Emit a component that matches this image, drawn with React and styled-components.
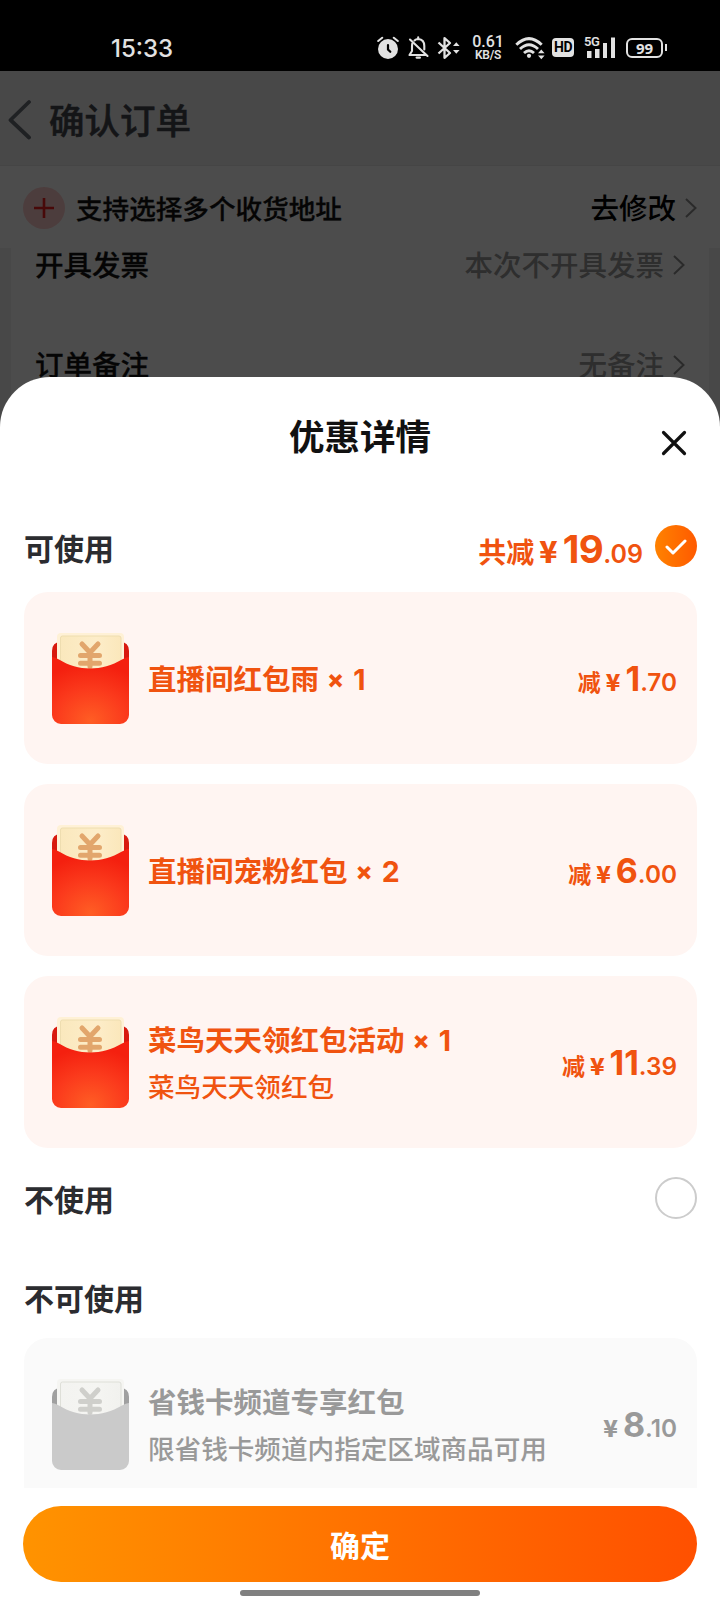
// src/pages/ConfirmOrder.jsx
import React, { useState } from "react";
import styled, { createGlobalStyle } from "styled-components";

const COUPONS = [
  { title: "直播间红包雨", count: 1, int: "1", dec: ".70" },
  { title: "直播间宠粉红包", count: 2, int: "6", dec: ".00" },
  { title: "菜鸟天天领红包活动", count: 1, sub: "菜鸟天天领红包", int: "11", dec: ".39" },
];

const DISABLED = [
  { title: "省钱卡频道专享红包", sub: "限省钱卡频道内指定区域商品可用", int: "8", dec: ".10" },
];

/* --------------------- PAGE --------------------- */

export default function App() {
  const [useCoupons, setUseCoupons] = useState(true);

  return (
    <Screen>
      <GlobalStyle />
      <StatusBar>
        <Clock>15:33</Clock>
        <StatusIcons />
      </StatusBar>

      <Page>
        <NavBar>
          <BackIcon />
          <NavTitle>确认订单</NavTitle>
        </NavBar>
        <AddressRow>
          <PlusBadge>
            <PlusIcon />
          </PlusBadge>
          <AddressText>支持选择多个收货地址</AddressText>
          <RowValue $dark>去修改</RowValue>
          <Chevron />
        </AddressRow>
        <OrderPanel>
          <OrderRow>
            <RowLabel>开具发票</RowLabel>
            <RowValue>本次不开具发票</RowValue>
            <Chevron />
          </OrderRow>
          <OrderRow>
            <RowLabel>订单备注</RowLabel>
            <RowValue>无备注</RowValue>
            <Chevron />
          </OrderRow>
        </OrderPanel>
        <Mask />
      </Page>

      <Sheet>
        <SheetHeader>
          <SheetTitle>优惠详情</SheetTitle>
          <Close aria-label="关闭">
            <CloseIcon />
          </Close>
        </SheetHeader>

        <Scroll>
          <Section $h={88} $pb={4}>
            <SectionTitle $down={5}>可使用</SectionTitle>
            <Total>
              <TotalLabel>共减</TotalLabel>
              <TotalYen>¥</TotalYen>
              <TotalInt>19</TotalInt>
              <TotalDec>.09</TotalDec>
            </Total>
            <Radio $on={useCoupons} onClick={() => setUseCoupons(true)}>
              {useCoupons && <CheckIcon />}
            </Radio>
          </Section>

          <CardList>
            {COUPONS.map((c) => (
              <Coupon key={c.title} {...c} />
            ))}
          </CardList>

          <Section $h={101} $pb={1}>
            <SectionTitle $down={3}>不使用</SectionTitle>
            <Radio $on={!useCoupons} onClick={() => setUseCoupons(false)}>
              {!useCoupons && <CheckIcon />}
            </Radio>
          </Section>

          <Section $h={89}>
            <SectionTitle $down={11}>不可使用</SectionTitle>
          </Section>

          <CardList>
            {DISABLED.map((c) => (
              <Coupon key={c.title} disabled {...c} />
            ))}
          </CardList>
        </Scroll>

        <Footer>
          <Confirm>确定</Confirm>
          <HomeBar />
        </Footer>
      </Sheet>
    </Screen>
  );
}

function Coupon({ title, count, sub, int, dec, disabled }) {
  return (
    <Card $disabled={disabled}>
      <Envelope gray={disabled} />
      <CardText>
        <CardTitle>
          {title}
          {count && (
            <>
              <Times>×</Times>
              {count}
            </>
          )}
        </CardTitle>
        {sub && <CardSub>{sub}</CardSub>}
      </CardText>
      <Price>
        {!disabled && <PriceLabel>减</PriceLabel>}
        <Yen>¥</Yen>
        <PriceInt>{int}</PriceInt>
        <PriceDec>{dec}</PriceDec>
      </Price>
    </Card>
  );
}

/* --------------------- ICONS --------------------- */

function Envelope({ gray }) {
  const id = gray ? "gray" : "red";
  return (
    <EnvelopeSvg viewBox="0 0 80 94">
      <defs>
        <radialGradient id={`body-${id}`} cx="0.5" cy="0.95" r="0.85">
          <stop offset="0" stopColor={gray ? "#cacaca" : "#ff5d24"} />
          <stop offset="0.55" stopColor={gray ? "#cacaca" : "#fb3a1c"} />
          <stop offset="1" stopColor={gray ? "#cacaca" : "#f4200f"} />
        </radialGradient>
        <linearGradient id={`note-${id}`} x1="0" x2="1" y1="0" y2="0">
          <stop offset="0" stopColor={gray ? "#f3f3f0" : "#fae8bd"} />
          <stop offset="0.6" stopColor={gray ? "#f5f5f2" : "#fdedc9"} />
          <stop offset="1" stopColor={gray ? "#f1f1ee" : "#fbe7bb"} />
        </linearGradient>
      </defs>
      <path d="M1 40V18Q1 9 10 9H69Q78 9 78 18V40Z" fill={gray ? "#a0a0a0" : "#d8190f"} />
      <rect x="6" y="0" width="67" height="45" rx="4" fill={gray ? "#f5f5f2" : "#fff1d6"} />
      <rect x="9.5" y="3" width="60.500" height="40" rx="2" fill={`url(#note-${id})`} stroke={gray ? "#dedfd8" : "#eeddb0"} strokeWidth="1" />
      <path
        d="M31 11l8 8.500l8-8.500M29.500 22.500h19M29.500 30.300h19M39 19.500v14"
        fill="none"
        stroke={gray ? "#cfcfcb" : "#e2a66c"}
        strokeWidth="5"
        strokeLinecap="round"
      />
      <path
        d="M1 24Q4 24 8 26.500C27 38.500 51 38.500 71 26.500Q75 24 78 24V82A9 9 0 0 1 69 91H10A9 9 0 0 1 1 82Z"
        fill={`url(#body-${id})`}
      />
    </EnvelopeSvg>
  );
}

const BackIcon = () => (
  <svg width="24" height="42" viewBox="0 0 24 42" fill="none" stroke="#6a6e77" strokeWidth="3.8" strokeLinecap="round" strokeLinejoin="round">
    <path d="M21 3L2.500 21L21 38.500" />
  </svg>
);

const PlusIcon = () => (
  <svg width="22" height="22" viewBox="0 0 22 22" stroke="#f02020" strokeWidth="2.600">
    <path d="M11 1v20M1 11h20" />
  </svg>
);

const Chevron = () => (
  <ChevronSvg viewBox="0 0 12 20">
    <path d="M1 1l9.500 9L1 19" />
  </ChevronSvg>
);

const CloseIcon = () => (
  <svg width="26" height="26" viewBox="0 0 26 26" stroke="#111" strokeWidth="3.200" strokeLinecap="round">
    <path d="M2.500 2.500l21 21M23.500 2.500l-21 21" />
  </svg>
);

const CheckIcon = () => (
  <svg width="22" height="18" viewBox="0 0 22 18" fill="none" stroke="#fff" strokeWidth="3" strokeLinecap="round" strokeLinejoin="round">
    <path d="M2 10l6 6L20 4" />
  </svg>
);

function StatusIcons() {
  return (
    <IconRow>
      <svg width="22" height="24" viewBox="0 0 22 24">
        <circle cx="11" cy="13" r="10" fill="#e2e2e2" />
        <path d="M1.200 5l4-3.300M20.800 5l-4-3.300" stroke="#e2e2e2" strokeWidth="2" strokeLinecap="round" />
        <path d="M11 9v4.500l2.300 2.300" stroke="#000" strokeWidth="2.200" fill="none" strokeLinecap="round" />
      </svg>
      <Gap $w={9} />
      <svg width="21" height="24" viewBox="0 0 21 24" fill="none" stroke="#e2e2e2" strokeWidth="2.100" strokeLinecap="round" strokeLinejoin="round">
        <path d="M6.500 4.500Q8 3 10.200 3Q16.300 3.500 16.300 10v3.500M4.300 7.500Q4 9 4 11v4L1.500 19h16" />
        <path d="M10.200 1.200v1.500M2 3.500L19.500 20" />
        <path d="M8.800 21.600h3" strokeWidth="2.400" />
      </svg>
      <Gap $w={8} />
      <svg width="23" height="24" viewBox="0 0 23 24" fill="none" stroke="#e2e2e2" strokeWidth="2.300" strokeLinejoin="round">
        <path d="M1.500 6.500L13 17L7.500 21.800V2.200L13 7L1.500 17.500" />
        <path d="M16 10l3.300-3.800l3.300 3.800zM16 14l3.300 3.800l3.300-3.800z" fill="#e2e2e2" stroke="none" />
      </svg>
      <Gap $w={12} />
      <NetSpeed>
        <b>0.61</b>
        <span>KB/S</span>
      </NetSpeed>
      <Gap $w={11} />
      <svg width="30" height="24" viewBox="0 0 30 24" fill="none" stroke="#e2e2e2" strokeWidth="2.900">
        <path d="M1.300 8.800Q14 -3.500 26.700 8.800M5 13Q14 4.500 23 13M9 17Q14 12.500 19 17" />
        <circle cx="14" cy="19.800" r="2.100" fill="#e2e2e2" stroke="none" />
        <path d="M23 17.200l3.300-3.700l3.300 3.700zM23 19.500l3.300 3.700l3.300-3.700z" fill="#e2e2e2" stroke="none" />
      </svg>
      <Gap $w={7} />
      <HdBadge>HD</HdBadge>
      <Gap $w={10} />
      <Signal>
        <small>5G</small>
        <svg width="32" height="24" viewBox="0 0 32 24" fill="#e2e2e2">
          <path d="M3 15h4.500v7H3zM11 13h4.500v9H11zM19 7h4v15h-4zM27 1.500h4v20.500h-4z" />
        </svg>
      </Signal>
      <Gap $w={10} />
      <Battery>99</Battery>
      <BatteryTip />
    </IconRow>
  );
}

/* --------------------- STYLES --------------------- */

const GlobalStyle = createGlobalStyle`
  * { box-sizing: border-box; }
  body {
    margin: 0;
    background: #fff;
    font-family: Inter, "Noto Sans CJK SC", sans-serif;
  }
  button { font-family: inherit; border: 0; padding: 0; background: none; }
  svg { display: block; flex: none; }
`;

const Screen = styled.div`
  position: relative;
  width: 720px;
  height: 1600px;
  overflow: hidden;
  white-space: nowrap;
`;

const StatusBar = styled.header`
  display: flex;
  justify-content: space-between;
  height: 71px;
  padding: 35px 53px 0 111px;
  background: #000;
  color: #e2e2e2;
`;

const Clock = styled.span`
  padding-top: 1px;
  font-size: 24px;
  line-height: 26px;
  font-weight: 500;
`;

const IconRow = styled.div`
  display: flex;
  align-items: center;
  height: 25px;
`;

const Gap = styled.i`
  width: ${({ $w }) => $w}px;
`;

const NetSpeed = styled.div`
  display: flex;
  flex-direction: column;
  align-items: center;
  width: 32px;
  b { font: 500 16px/14px Roboto, sans-serif; }
  span { font: 600 12px/12px Roboto, sans-serif; letter-spacing: -0.3px; }
`;

const HdBadge = styled.span`
  width: 22px;
  height: 19px;
  border-radius: 4px;
  background: #e2e2e2;
  color: #000;
  font: 700 14px/19px Roboto, sans-serif;
  letter-spacing: -0.5px;
  text-align: center;
`;

const Signal = styled.div`
  position: relative;
  small {
    position: absolute;
    left: 0;
    top: 0;
    font: 600 13px/12px Roboto, sans-serif;
    letter-spacing: -0.5px;
    background: #000;
  }
`;

const Battery = styled.span`
  width: 37px;
  height: 20px;
  border: 2px solid #e2e2e2;
  border-radius: 6px;
  font: 700 15px/16px "Noto Sans", sans-serif;
  text-align: center;
`;

const BatteryTip = styled.i`
  width: 2px;
  height: 7px;
  margin-left: 2px;
  background: #e2e2e2;
`;

const Page = styled.main`
  position: relative;
  height: 429px;
  background: #f1f1f1;
  overflow: hidden;
`;

const Mask = styled.div`
  position: absolute;
  inset: 0;
  background: rgba(0, 0, 0, 0.7);
`;

const NavBar = styled.div`
  display: flex;
  align-items: center;
  gap: 17px;
  height: 95px;
  padding: 3px 0 0 8px;
  border-bottom: 1px solid #e6e6e6;
`;

const NavTitle = styled.h1`
  margin: 0;
  padding-top: 4px;
  font-size: 35.5px;
  font-weight: 500;
  line-height: 50px;
  color: #45474d;
  -webkit-text-stroke: 0.5px currentColor;
`;

const AddressRow = styled.div`
  display: flex;
  align-items: center;
  height: 82px;
  padding: 1px 23px 0;
  background: #fff;
`;

const PlusBadge = styled.span`
  display: flex;
  align-items: center;
  justify-content: center;
  width: 42px;
  height: 42px;
  margin-right: 11px;
  border-radius: 50%;
  background: #ffcccc;
`;

const AddressText = styled.span`
  flex: 1;
  font-size: 26.6px;
  font-weight: 500;
  color: #111;
  -webkit-text-stroke: 0.3px currentColor;
`;

const OrderPanel = styled.div`
  height: 260px;
  margin: 0 11px;
  padding: 1px 24px 0;
  background: #fff;
`;

const OrderRow = styled.div`
  display: flex;
  align-items: center;
  height: 32px;
  margin-bottom: 68px;
`;

const RowLabel = styled.span`
  flex: 1;
  padding-top: 2px;
  font-size: 28.5px;
  line-height: 32px;
  font-weight: 500;
  color: #111;
  -webkit-text-stroke: 0.3px currentColor;
`;

const RowValue = styled.span`
  margin-right: 9px;
  padding-top: 2px;
  font-size: 28.5px;
  line-height: 32px;
  font-weight: 500;
  color: ${({ $dark }) => ($dark ? "#000" : "#999")};
`;

const ChevronSvg = styled.svg`
  width: 12px;
  height: 20px;
  fill: none;
  stroke: #8c8c8c;
  stroke-width: 2;
`;

const Sheet = styled.section`
  position: absolute;
  left: 0;
  right: 0;
  top: 377px;
  bottom: 0;
  display: flex;
  flex-direction: column;
  background: #fff;
  border-radius: 50px 50px 0 0;
`;

const SheetHeader = styled.div`
  display: grid;
  grid-template-columns: 1fr auto 1fr;
  align-items: center;
  height: 127px;
  padding: 0 33px 5px;
`;

const SheetTitle = styled.h2`
  grid-column: 2;
  margin: 0;
  font-size: 35.5px;
  line-height: 50px;
  font-weight: 700;
  color: #111;
`;

const Close = styled.button`
  justify-self: end;
  padding-top: 9px;
`;

const Scroll = styled.div`
  height: 984px;
  padding: 0 23px 0 24px;
  overflow: hidden;
`;

const Section = styled.div`
  display: flex;
  align-items: center;
  justify-content: space-between;
  height: ${({ $h }) => $h}px;
  padding-bottom: ${({ $pb = 0 }) => $pb}px;
`;

const SectionTitle = styled.h3`
  flex: 1;
  margin: 0;
  padding-top: ${({ $down }) => $down}px;
  font-size: 30px;
  line-height: 44px;
  font-weight: 700;
  color: #2b2c30;
`;

const Total = styled.div`
  display: flex;
  align-items: baseline;
  margin-right: 12px;
  padding-top: 5px;
  color: #f0530f;
  font-weight: 700;
`;

const TotalLabel = styled.span`
  font-size: 28px;
`;
const TotalYen = styled.span`
  margin: 0 5px 0 5px;
  font-family: "Noto Sans CJK SC", sans-serif;
  font-size: 30px;
  font-weight: 800;
  line-height: 1;
`;
const TotalInt = styled.span`
  font-size: 38.5px;
  font-weight: 700;
  letter-spacing: -0.5px;
`;
const TotalDec = styled.span`
  font-size: 25px;
  font-weight: 600;
`;

const Radio = styled.button`
  display: flex;
  align-items: center;
  justify-content: center;
  width: 42px;
  height: 42px;
  border-radius: 50%;
  border: ${({ $on }) => ($on ? "0" : "2px solid #ccc")};
  background: ${({ $on }) => ($on ? "linear-gradient(90deg, #ff8200, #ff5a00)" : "#fff")};
`;

const CardList = styled.div`
  display: flex;
  flex-direction: column;
  gap: 20px;
`;

const Card = styled.article`
  display: flex;
  align-items: center;
  height: 172px;
  padding: 4px 20px 0 27px;
  border-radius: 24px;
  color: ${({ $disabled }) => ($disabled ? "#999" : "#f0530f")};
  background: ${({ $disabled }) => ($disabled ? "#fafafa" : "#fff5f2")};
`;

const EnvelopeSvg = styled.svg`
  width: 80px;
  height: 94px;
  margin-right: 17px;
`;

const CardText = styled.div`
  flex: 1;
  display: flex;
  flex-direction: column;
  gap: 6px;
`;

const CardTitle = styled.h4`
  display: flex;
  margin: 0;
  font-size: 28.5px;
  line-height: 40px;
  font-weight: 700;
`;

const Times = styled.span`
  margin: 0 9px 0 8px;
  font-size: 25px;
  line-height: 38px;
  font-weight: 800;
`;

const CardSub = styled.p`
  margin: 0;
  font-size: 26.6px;
  line-height: 40px;
  font-weight: 500;
`;

const Price = styled.div`
  display: flex;
  align-items: baseline;
  padding-bottom: 4px;
  font-weight: 700;
`;

const PriceLabel = styled.span`
  font-size: 23px;
`;
const Yen = styled.span`
  margin: 0 5px 0 5px;
  font-family: "Noto Sans CJK SC", sans-serif;
  font-size: 24px;
  font-weight: 800;
  line-height: 1;
`;
const PriceInt = styled.span`
  font-size: 34px;
`;
const PriceDec = styled.span`
  font-size: 24.3px;
  font-weight: 600;
`;

const Footer = styled.footer`
  display: flex;
  flex-direction: column;
  align-items: center;
  padding: 18px 23px 0;
`;

const Confirm = styled.button`
  width: 100%;
  height: 76px;
  border-radius: 38px;
  background: linear-gradient(90deg, #ff9300, #ff5000);
  color: #fff;
  font-size: 30px;
  font-weight: 700;
`;

const HomeBar = styled.div`
  width: 240px;
  height: 6px;
  margin-top: 8px;
  border-radius: 3px;
  background: #808080;
`;
